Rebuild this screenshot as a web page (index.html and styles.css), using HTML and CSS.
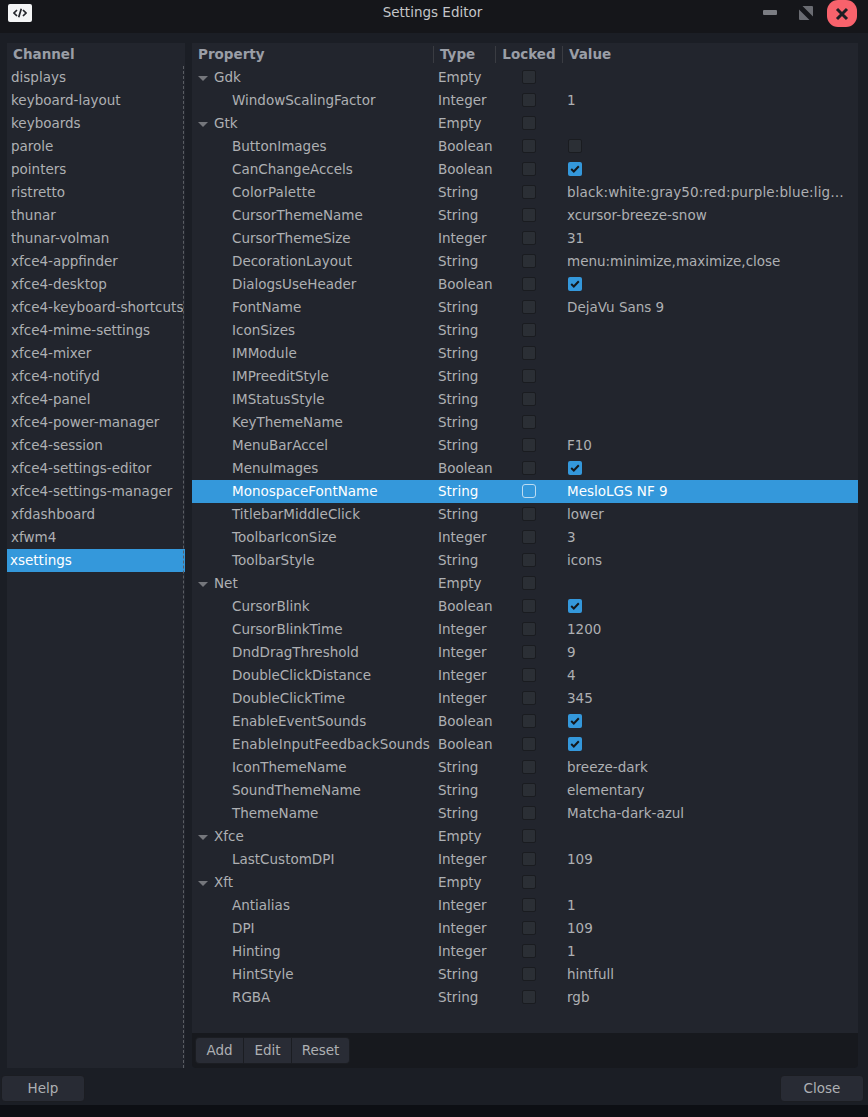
FILE: index.html
```html
<!DOCTYPE html>
<html lang="en">
<head>
<meta charset="utf-8">
<title>Settings Editor</title>
<link rel="stylesheet" href="styles.css">
</head>
<body>
<div class="window">
  <header class="titlebar">
    <div class="appicon"><svg width="14" height="10" viewBox="0 0 14 10"><path d="M4 2 1 5l3 3M10 2l3 3-3 3M8.3 0.8 5.7 9.2" fill="none" stroke="#23252b" stroke-width="1.7"/></svg></div>
    <div class="title">Settings Editor</div>
    <div class="wm">
      <svg class="wm-min" width="14" height="5" viewBox="0 0 14 5"><rect width="14" height="5" rx="1" fill="#7b7d83"/></svg>
      <svg class="wm-max" width="14" height="14" viewBox="0 0 14 14"><path d="M3.5 0H13a1 1 0 0 1 1 1v9.5zM0 3.5V13a1 1 0 0 0 1 1h9.5z" fill="#6a6c72"/></svg>
      <div class="wm-close"><svg width="14" height="14" viewBox="0 0 14 14"><path d="M2 2l10 10M12 2 2 12" stroke="#1d1e24" stroke-width="3" fill="none"/></svg></div>
    </div>
  </header>
  <main class="content">
    <aside class="channels">
      <div class="channels-head">Channel</div>
      <ul class="channel-list">
        <li>displays</li><li>keyboard-layout</li><li>keyboards</li><li>parole</li><li>pointers</li><li>ristretto</li><li>thunar</li><li>thunar-volman</li><li>xfce4-appfinder</li><li>xfce4-desktop</li><li>xfce4-keyboard-shortcuts</li><li>xfce4-mime-settings</li><li>xfce4-mixer</li><li>xfce4-notifyd</li><li>xfce4-panel</li><li>xfce4-power-manager</li><li>xfce4-session</li><li>xfce4-settings-editor</li><li>xfce4-settings-manager</li><li>xfdashboard</li><li>xfwm4</li><li class="sel">xsettings</li>
      </ul>
    </aside>
    <section class="props">
      <div class="tree">
        <div class="row head"><span class="c1">Property</span><span class="c2">Type</span><span class="c3">Locked</span><span class="c4">Value</span></div>
        <div id="rows"></div>
      </div>
      <div class="toolbar">
        <div class="linked"><button>Add</button><button>Edit</button><button>Reset</button></div>
      </div>
    </section>
  </main>
  <footer class="actions"><button class="act">Help</button><button class="act">Close</button></footer>
</div>
<script src="app.js"></script>
</body>
</html>
```
FILE: styles.css
```css
* { box-sizing: border-box; }
html, body { margin: 0; height: 100%; background: #0d0f14; }
body { font-family: "DejaVu Sans", sans-serif; font-size: 13.5px; color: #aeb0b3; overflow: hidden; }
.window { width: 868px; height: 1105px; background: #1b1e25; display: flex; flex-direction: column; }
.titlebar { height: 33px; flex: none; background: #15161a; display: grid; grid-template-columns: 1fr auto 1fr; align-items: start; padding: 0 11px 0 8px; }
.appicon { width: 24px; height: 18px; margin-top: 4px; background: #f4f5f6; border-radius: 2px; display: flex; align-items: center; justify-content: center; }
.title { color: #c4c6c9; line-height: 24px; }
.wm { display: flex; align-items: flex-start; justify-self: end; }
.wm-min { margin: 10px 22px 0 0; }
.wm-max { margin: 6px 14px 0 0; }
.wm-close { width: 30px; height: 27px; background: #f8626c; border-radius: 11px; display: flex; align-items: center; justify-content: center; }
.content { flex: 1; display: flex; padding: 10px 10px 0 7px; gap: 7px; min-height: 0; }
.channels { width: 178px; height: 1025px; flex: none; background: #22252d; position: relative; }
.channels::after { content: ""; position: absolute; right: 1px; top: 23px; bottom: 0; border-right: 1px dashed #5a5d63; }
.channels-head { height: 23px; padding-left: 6px; font-weight: 700; color: #9a9ea6; line-height: 23px; }
.channel-list { list-style: none; margin: 0; padding: 0; }
.channel-list li { height: 23px; line-height: 23px; padding-left: 4px; white-space: nowrap; overflow: hidden; color: #aeb0b3; }
.channel-list .sel { background: #3498db; color: #fff; padding-left: 3px; }
.props { width: 666px; height: 1025px; flex: none; background: #17191e; border-radius: 0 0 4px 4px; display: flex; flex-direction: column; }
.tree { height: 990px; flex: none; background: #22252d; }
.row { display: flex; height: 23px; line-height: 23px; align-items: center; white-space: nowrap; }
.row.selected { background: #3498db; color: #fff; }
.c1 { width: 242px; flex: none; display: flex; align-items: center; }
.c2 { width: 62px; flex: none; padding-left: 4px; }
.c3 { width: 66px; flex: none; display: flex; justify-content: center; }
.c4 { flex: 1; min-width: 0; padding-left: 5px; display: flex; align-items: center; }
.head { font-weight: 700; color: #9a9ea6; }
.head .c1 { padding-left: 6px; border-right: 1px solid #3a3c42; height: 17px; line-height: 17px; }
.head .c2 { padding-left: 6px; border-right: 1px solid #3a3c42; height: 17px; line-height: 17px; }
.head .c3 { width: 67px; border-right: 1px solid #3a3c42; height: 17px; line-height: 17px; }
.head .c4 { padding-left: 6px; }
.group .c1 { padding-left: 6px; }
.arrow { width: 0; height: 0; border-left: 5px solid transparent; border-right: 5px solid transparent; border-top: 5px solid #75777c; margin-right: 6px; margin-top: 1px; }
.leaf .c1 { padding-left: 40px; }
.wide .c1, .wide .c4 { letter-spacing: .13px; }
.cb { width: 14px; height: 14px; margin-bottom: 1px; border-radius: 2px; background: #2b2f35; border: 1px solid #1a1c20; display: block; }
.selected .cb { background: transparent; border-color: #bcdcf2; border-radius: 3px; }
.c4 .cb { margin-left: 1px; }
.cb.on { background: #3498db; border: 0; display: flex; align-items: center; justify-content: center; }
.toolbar { padding: 4px 3px; }
.linked { display: inline-flex; }
button { font: inherit; color: #aeb0b3; background: #292c35; border: 1px solid #1b1d22; height: 27px; padding: 0 0 1px; }
.linked button { width: 48px; border-left: 0; }
.linked button:first-child { width: 49px; border-left: 1px solid #1b1d22; border-radius: 4px 0 0 4px; }
.linked button:last-child { border-radius: 0 4px 4px 0; width: 58px; }
.actions { height: 37px; flex: none; display: flex; justify-content: space-between; padding: 7px 4px 0 1px; }
.act { width: 84px; border-radius: 4px; background: #282b34; }
```
FILE: app.js
```js
var data = [
["g","Gdk","Empty"],["l","WindowScalingFactor","Integer","1"],
["g","Gtk","Empty"],["l","ButtonImages","Boolean",0],["l","CanChangeAccels","Boolean",1],
["w","ColorPalette","String","black:white:gray50:red:purple:blue:lig…"],
["l","CursorThemeName","String","xcursor-breeze-snow"],["l","CursorThemeSize","Integer","31"],
["l","DecorationLayout","String","menu:minimize,maximize,close"],["l","DialogsUseHeader","Boolean",1],
["l","FontName","String","DejaVu Sans 9"],["l","IconSizes","String",""],["l","IMModule","String",""],
["l","IMPreeditStyle","String",""],["l","IMStatusStyle","String",""],["l","KeyThemeName","String",""],
["l","MenuBarAccel","String","F10"],["l","MenuImages","Boolean",1],
["s","MonospaceFontName","String","MesloLGS NF 9"],["l","TitlebarMiddleClick","String","lower"],
["l","ToolbarIconSize","Integer","3"],["l","ToolbarStyle","String","icons"],
["g","Net","Empty"],["l","CursorBlink","Boolean",1],["l","CursorBlinkTime","Integer","1200"],
["l","DndDragThreshold","Integer","9"],["l","DoubleClickDistance","Integer","4"],["l","DoubleClickTime","Integer","345"],
["l","EnableEventSounds","Boolean",1],["w","EnableInputFeedbackSounds","Boolean",1],
["l","IconThemeName","String","breeze-dark"],["l","SoundThemeName","String","elementary"],["l","ThemeName","String","Matcha-dark-azul"],
["g","Xfce","Empty"],["l","LastCustomDPI","Integer","109"],
["g","Xft","Empty"],["l","Antialias","Integer","1"],["l","DPI","Integer","109"],["l","Hinting","Integer","1"],
["l","HintStyle","String","hintfull"],["l","RGBA","String","rgb"]
];
var kinds = { g: "group", s: "leaf selected", w: "leaf wide", l: "leaf" };
var check = '<svg width="10" height="8" viewBox="0 0 10 8"><path d="M1.2 4l2.6 2.5L8.8 1.2" fill="none" stroke="#14181c" stroke-width="2"/></svg>';
var out = "";
data.forEach(function (d) {
  var arrow = d[0] === "g" ? '<i class="arrow"></i>' : "";
  var val = "";
  if (d[3] === 0) val = '<i class="cb"></i>';
  else if (d[3] === 1) val = '<i class="cb on">' + check + "</i>";
  else if (d[3]) val = "<span>" + d[3] + "</span>";
  out += '<div class="row ' + kinds[d[0]] + '"><span class="c1">' + arrow + d[1] + '</span><span class="c2">' + d[2] +
    '</span><span class="c3"><i class="cb"></i></span><span class="c4">' + val + "</span></div>";
});
document.getElementById("rows").innerHTML = out;
```
